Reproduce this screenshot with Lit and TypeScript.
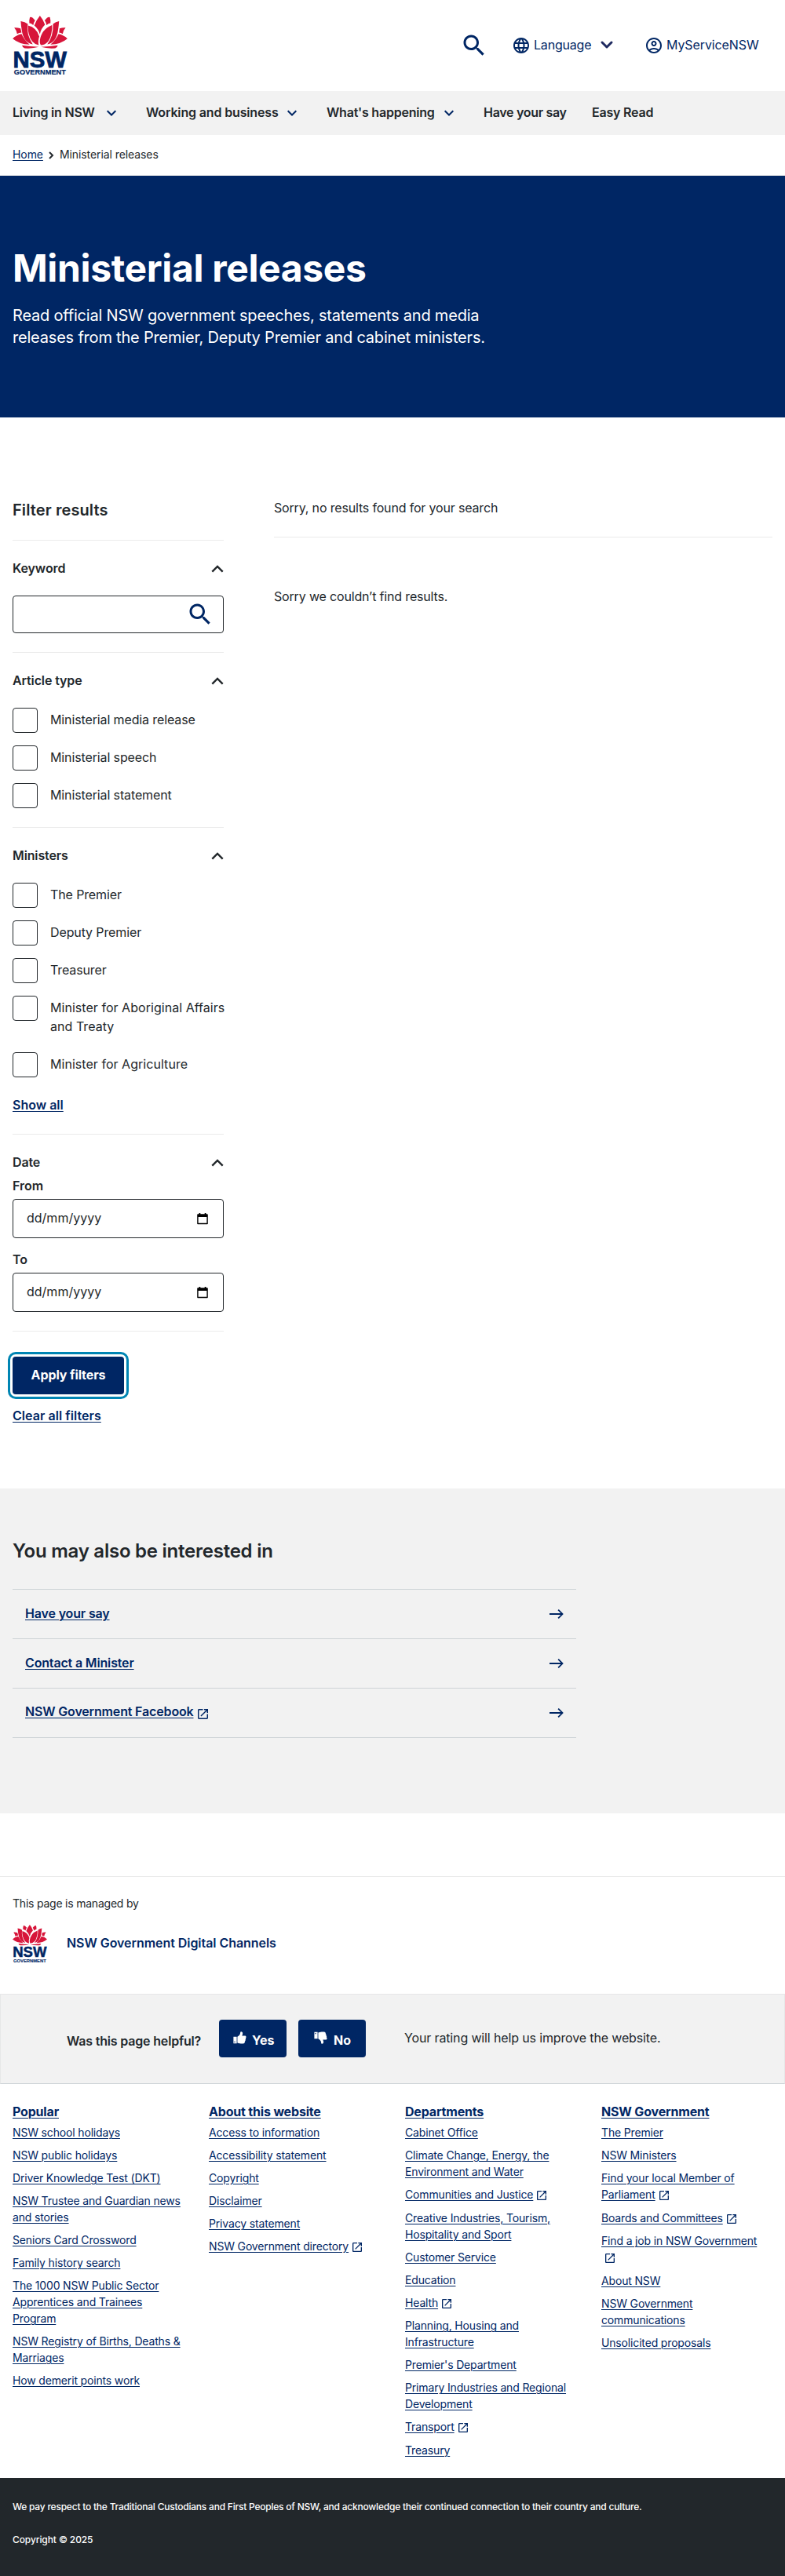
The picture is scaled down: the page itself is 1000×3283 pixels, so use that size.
import { LitElement, html, css, svg, nothing } from "lit";
import { customElement } from "lit/decorators.js";

interface FooterLink {
  lines: string[];
  external?: boolean;
  iconBelow?: boolean;
}

const link = (...lines: string[]): FooterLink => ({ lines });
const ext = (...lines: string[]): FooterLink => ({ lines, external: true });

const NAV = [
  { label: "Living in NSW", menu: true },
  { label: "Working and business", menu: true },
  { label: "What's happening", menu: true },
  { label: "Have your say", menu: false },
  { label: "Easy Read", menu: false },
];

const ARTICLE_TYPES = ["Ministerial media release", "Ministerial speech", "Ministerial statement"];
const MINISTERS = [
  "The Premier",
  "Deputy Premier",
  "Treasurer",
  "Minister for Aboriginal Affairs and Treaty",
  "Minister for Agriculture",
];

const RELATED = [
  { label: "Have your say", external: false },
  { label: "Contact a Minister", external: false },
  { label: "NSW Government Facebook", external: true },
];

const FOOTER: { title: string; links: FooterLink[] }[] = [
  {
    title: "Popular",
    links: [
      link("NSW school holidays"),
      link("NSW public holidays"),
      link("Driver Knowledge Test (DKT)"),
      link("NSW Trustee and Guardian news", "and stories"),
      link("Seniors Card Crossword"),
      link("Family history search"),
      link("The 1000 NSW Public Sector", "Apprentices and Trainees", "Program"),
      link("NSW Registry of Births, Deaths &", "Marriages"),
      link("How demerit points work"),
    ],
  },
  {
    title: "About this website",
    links: [
      link("Access to information"),
      link("Accessibility statement"),
      link("Copyright"),
      link("Disclaimer"),
      link("Privacy statement"),
      ext("NSW Government directory"),
    ],
  },
  {
    title: "Departments",
    links: [
      link("Cabinet Office"),
      link("Climate Change, Energy, the", "Environment and Water"),
      ext("Communities and Justice"),
      link("Creative Industries, Tourism,", "Hospitality and Sport"),
      link("Customer Service"),
      link("Education"),
      ext("Health"),
      link("Planning, Housing and", "Infrastructure"),
      link("Premier's Department"),
      link("Primary Industries and Regional", "Development"),
      ext("Transport"),
      link("Treasury"),
    ],
  },
  {
    title: "NSW Government",
    links: [
      link("The Premier"),
      link("NSW Ministers"),
      ext("Find your local Member of", "Parliament"),
      ext("Boards and Committees"),
      { lines: ["Find a job in NSW Government"], external: true, iconBelow: true },
      link("About NSW"),
      link("NSW Government", "communications"),
      link("Unsolicited proposals"),
    ],
  },
];

const logo = (cls: string) => html`
  <svg class=${cls} viewBox="48 60 210 229" role="img" aria-label="NSW Government">
    <g fill="#d7153a">
      <path d="M48 148Q62 134 82 130Q92 153 113 171Q72 169 48 148Z" />
      <path d="M54 106Q66 105 78 109L82 125Q72 126 65 130Q63 116 54 106Z" />
      <path d="M79 81Q95 83 106 92Q99 132 125 170Q89 163 83 116Q80 98 79 81Z" />
      <path d="M114 66Q122 62 134 78Q128 87 127 96Q118 89 112 89Q111 76 114 66Z" />
      <path d="M107 98Q140 106 150 140Q144 158 148 173Q119 168 110 130Q105 114 107 98Z" />
      <path d="M152.500 60Q165 74 172 95Q155 112 152.500 131Q147 112 131 98Q139 76 152.500 60Z" />
      <path d="M199 96Q158 112 152 156Q151 168 156 173Q187 172 196 130Q201 112 199 96Z" />
      <path d="M191 66Q183 62 171 78Q177 87 178 96Q187 89 193 89Q194 76 191 66Z" />
      <path d="M226 81Q213 83 203 92Q205 138 181 170Q216 163 222 116Q225 98 226 81Z" />
      <path d="M251 106Q239 105 228 109L226 125Q233 126 240 130Q242 116 251 106Z" />
      <path d="M258 148Q244 134 224 130Q214 153 193 171Q234 169 258 148Z" />
      <path d="M84 174Q115 178 148 180Q125 187 94 185Q85 182 84 174Z" />
      <path d="M221 174Q190 178 157 180Q180 187 211 185Q220 182 221 174Z" />
    </g>
    <g fill="#002664" stroke="#002664" font-family="'Liberation Sans', Arial, sans-serif" font-weight="700">
      <text x="49" y="258" font-size="90" stroke-width="2.500" textLength="206" lengthAdjust="spacingAndGlyphs">NSW</text>
      <text x="53" y="287" font-size="28" stroke-width="0.600" textLength="199" lengthAdjust="spacingAndGlyphs">GOVERNMENT</text>
    </g>
  </svg>
`;

const searchPath = svg`<path
  d="M15.5 14h-.79l-.28-.27C15.410 12.590 16 11.110 16 9.500 16 5.910 13.090 3 9.500 3S3 5.910 3 9.500 5.910 16 9.500 16c1.610 0 3.090-.59 4.230-1.570l.27.28v.79l5 4.990L20.490 19l-4.990-5zm-6 0C7.010 14 5 11.990 5 9.500S7.010 5 9.500 5 14 7.010 14 9.500 11.990 14 9.500 14z"
/>`;

const searchIcon = () => html`<svg class="ico36" viewBox="0 0 24 24">${searchPath}</svg>`;

const globeIcon = () => html`<svg class="ico24" viewBox="0 0 24 24">
  <path
    d="M11.990 2C6.470 2 2 6.480 2 12s4.470 10 9.990 10C17.520 22 22 17.520 22 12S17.520 2 11.990 2zm6.930 6h-2.950c-.32-1.250-.78-2.450-1.380-3.560 1.840.63 3.370 1.910 4.330 3.560zM12 4.040c.83 1.200 1.480 2.530 1.910 3.960h-3.820c.43-1.430 1.080-2.760 1.910-3.960zM4.260 14C4.100 13.360 4 12.690 4 12s.1-1.360.26-2h3.380c-.08.66-.14 1.320-.14 2s.06 1.340.14 2H4.260zm.82 2h2.950c.32 1.250.78 2.450 1.380 3.560-1.840-.63-3.370-1.900-4.330-3.560zm2.950-8H5.080c.96-1.660 2.490-2.930 4.330-3.560C8.810 5.550 8.350 6.750 8.030 8zM12 19.960c-.83-1.200-1.480-2.530-1.910-3.960h3.820c-.43 1.430-1.080 2.760-1.910 3.960zM14.340 14H9.660c-.09-.66-.16-1.320-.16-2s.07-1.350.16-2h4.680c.09.65.16 1.320.16 2s-.07 1.340-.16 2zm.25 5.560c.6-1.110 1.060-2.310 1.380-3.560h2.950c-.96 1.650-2.490 2.930-4.330 3.560zM16.360 14c.08-.66.14-1.320.14-2s-.06-1.340-.14-2h3.380c.16.64.26 1.310.26 2s-.1 1.360-.26 2h-3.380z"
  />
</svg>`;

const userIcon = () => html`<svg class="ico24" viewBox="0 0 24 24">
  <path
    d="M12 2C6.480 2 2 6.480 2 12s4.480 10 10 10 10-4.480 10-10S17.520 2 12 2zM7.350 18.500C8.660 17.560 10.260 17 12 17s3.340.56 4.650 1.500C15.340 19.440 13.740 20 12 20s-3.340-.56-4.650-1.500zm10.790-1.380C16.450 15.800 14.320 15 12 15s-4.450.8-6.140 2.120C4.700 15.730 4 13.950 4 12c0-4.420 3.580-8 8-8s8 3.580 8 8c0 1.950-.7 3.730-1.860 5.120z"
  />
  <path
    d="M12 6c-1.930 0-3.500 1.570-3.500 3.500S10.070 13 12 13s3.500-1.570 3.500-3.500S13.930 6 12 6zm0 5c-.83 0-1.500-.67-1.500-1.500S11.170 8 12 8s1.500.67 1.500 1.500S12.830 11 12 11z"
  />
</svg>`;

const upIcon = () => html`<svg class="up" viewBox="0 0 16 10">
  <path d="M1.300 8.600L8 1.900l6.700 6.700" />
</svg>`;

const externalIcon = (cls: string) => html`<svg class=${cls} viewBox="3 3 18 18">
  <path
    d="M19 19H5V5h7V3H5c-1.110 0-2 .9-2 2v14c0 1.100.89 2 2 2h14c1.100 0 2-.9 2-2v-7h-2v7zM14 3v2h3.590l-9.830 9.830 1.410 1.410L19 6.410V10h2V3h-7z"
  />
</svg>`;

const arrowIcon = () => html`<svg class="arrow" viewBox="0 0 18 12">
  <path d="M0 5h14.300L10.500 1.300 11.800 0 17.800 6l-6 6-1.300-1.300L14.300 7H0z" />
</svg>`;

const calendarIcon = () => html`<svg class="cal" viewBox="0 0 14 15">
  <path fill-rule="evenodd" d="M2.500 0h1.800v1.200h5.400V0h1.800v1.200H13a.8.8 0 0 1 .8.8v11.400a.8.8 0 0 1-.8.8H1a.8.8 0 0 1-.8-.8V2a.8.8 0 0 1 .8-.8h1.500zM1.600 5v7.800h10.800V5z" />
</svg>`;

const thumbIcon = (cls: string) => html`<svg class=${cls} viewBox="0 0 17 16">
  <path fill-rule="evenodd" d="M.4 6.700h4.200v8.500H.4zM1.400 12.700v1.300h1.200v-1.300z" />
  <path
    d="M5.400 6.800c1.400-.6 2.900-2.300 3.400-3.500.3-.8.2-2.100.7-2.800.4-.5 1.600-.4 2.200.4.700 1 .5 2.600-.1 3.800l-.3.800h3.600c1 0 1.700.7 1.700 1.500 0 .6-.2 1-.6 1.300.4.900.2 1.700-.4 2.300.2.9 0 1.700-.7 2.200.2 1.500-.7 2.600-2.300 2.700-2.500.2-4.400-.1-7.200-1z"
  />
</svg>`;

@customElement("app-root")
export class AppRoot extends LitElement {
  static styles = css`
    :host {
      display: block;
      width: 1000px;
      background: #fff;
      color: #22272b;
      font: 400 16px/24px Inter, "Liberation Sans", sans-serif;
    }
    * {
      box-sizing: border-box;
      margin: 0;
      padding: 0;
    }
    ul {
      list-style: none;
    }
    svg {
      display: block;
      flex: none;
      fill: #002664;
      overflow: visible;
    }
    a {
      color: #002664;
      text-decoration: underline;
      text-underline-offset: 2px;
      text-decoration-thickness: 1px;
    }
    /* Optical alignment: lifts single text runs by one pixel. */
    .t {
      transform: translateY(-1px);
    }
    .ico36 {
      width: 36px;
      height: 36px;
    }
    .ico24 {
      width: 24px;
      height: 24px;
    }
    .header {
      height: 116px;
      padding: 0 35px 0 16px;
      display: flex;
      align-items: center;
    }
    .logo-main {
      width: 70px;
      height: 76px;
      margin-right: auto;
    }
    .tools {
      display: flex;
      align-items: center;
      color: #002664;
      letter-spacing: -0.2px;
    }
    .tool {
      display: flex;
      align-items: center;
      gap: 4px;
    }
    .tool.lang {
      margin-left: 30px;
      width: 129px;
    }
    .tool.user {
      margin-left: 40px;
      width: 144px;
      white-space: nowrap;
      letter-spacing: -0.1px;
    }
    .lang-chev {
      width: 16px;
      height: 10px;
      margin-left: auto;
      margin-top: -2px;
      fill: none;
      stroke: #1f2a60;
      stroke-width: 3;
      stroke-linecap: round;
      stroke-linejoin: round;
    }
    .nav {
      height: 56px;
      background: #f2f2f2;
      padding-left: 16px;
      display: flex;
      align-items: center;
      font-weight: 600;
    }
    .nav-item {
      display: flex;
      align-items: center;
      white-space: nowrap;
      letter-spacing: -0.22px;
    }
    .nav-item.n0 { width: 170px; }
    .nav-item.n1 { width: 230px; letter-spacing: -0.15px; }
    .nav-item.n2 { width: 200px; }
    .nav-item.n3 { width: 138px; letter-spacing: -0.3px; }
    .nav-chev {
      width: 12px;
      height: 8px;
      margin-left: auto;
      margin-right: 38px;
      fill: none;
      stroke: #002664;
      stroke-width: 2;
    }
    .crumbs {
      height: 52px;
      border-bottom: 1px solid #ebebeb;
      padding: 14px 16px 0;
      display: flex;
      align-items: flex-start;
      font-size: 14px;
      line-height: 21px;
      letter-spacing: -0.08px;
    }
    .crumb-chev {
      width: 7px;
      height: 10px;
      margin: 7px 7px 0 7px;
      fill: none;
      stroke: #22272b;
      stroke-width: 2;
    }
    .hero {
      height: 308px;
      background: #002664;
      color: #fff;
      padding: 88px 16px 0;
    }
    .hero h1 {
      font-size: 48px;
      line-height: 60px;
      font-weight: 700;
      letter-spacing: -0.35px;
    }
    .hero p {
      font-size: 20px;
      line-height: 28px;
      margin-top: 16px;
      letter-spacing: -0.2px;
    }
    .body {
      display: flex;
      gap: 64px;
      padding: 104px 16px 80px;
      align-items: flex-start;
    }
    .filters {
      width: 269px;
      flex: none;
    }
    .filters h2 {
      font-size: 20px;
      line-height: 28px;
      font-weight: 600;
      padding-bottom: 24px;
      letter-spacing: 0.1px;
    }
    .group {
      border-top: 1px solid #ebebeb;
      padding: 24px 0;
    }
    .group.last {
      border-bottom: 1px solid #ebebeb;
    }
    .group-head {
      display: flex;
      justify-content: space-between;
      align-items: center;
      font-weight: 600;
      letter-spacing: -0.12px;
    }
    .up {
      width: 16px;
      height: 10px;
      fill: none;
      stroke: #22272b;
      stroke-width: 2.4;
    }
    .keyword {
      margin-top: 22px;
      height: 48px;
      border: 1px solid #22272b;
      border-radius: 4px;
      display: flex;
      justify-content: flex-end;
      align-items: center;
      padding-right: 11px;
    }
    .checks {
      margin-top: 22px;
      display: flex;
      flex-direction: column;
      gap: 16px;
    }
    .checks li {
      display: flex;
      gap: 16px;
    }
    .box {
      width: 32px;
      height: 32px;
      flex: none;
      border: 1px solid #22272b;
      border-radius: 4px;
    }
    .box-label {
      padding: 4px 0;
      margin-right: -12px;
      letter-spacing: -0.12px;
    }
    .box-label.wide {
      letter-spacing: 0.04px;
    }
    .showall {
      display: block;
      margin-top: 24px;
      font-weight: 600;
    }
    .field-label {
      display: block;
      font-weight: 600;
      margin-top: 6px;
    }
    .field-label.to {
      margin-top: 16px;
    }
    .date {
      margin-top: 4px;
      height: 50px;
      border: 1px solid #22272b;
      border-radius: 4px;
      display: flex;
      align-items: center;
      justify-content: space-between;
      padding: 0 19px 0 17px;
    }
    .cal {
      width: 14px;
      height: 15px;
      fill: #000;
    }
    .apply {
      width: 142px;
      height: 48px;
      margin-top: 32px;
      border-radius: 4px;
      background: #002664;
      color: #fff;
      font-weight: 700;
      display: flex;
      align-items: center;
      justify-content: center;
      letter-spacing: -0.1px;
      outline: 3px solid #0085b3;
      outline-offset: 3px;
    }
    .clear {
      display: block;
      margin-top: 16px;
      font-weight: 600;
      letter-spacing: 0.06px;
    }
    .results {
      flex: 1;
      letter-spacing: -0.17px;
    }
    .results p:first-child {
      margin-top: -1px;
      padding-bottom: 25px;
      border-bottom: 1px solid #ebebeb;
      margin-bottom: 63px;
    }
    .related {
      background: #f2f2f2;
      height: 414px;
      padding: 64px 16px 0;
    }
    .related h2 {
      font-size: 24px;
      line-height: 32px;
      font-weight: 600;
      margin-bottom: 32px;
      letter-spacing: -0.24px;
    }
    .related ul {
      width: 718px;
      border-top: 1px solid #cdd3d6;
    }
    .related li {
      height: 63px;
      border-bottom: 1px solid #cdd3d6;
      padding: 0 16px;
      display: flex;
      align-items: center;
    }
    .related a {
      font-weight: 600;
      letter-spacing: -0.16px;
    }
    .related .external a {
      margin-top: -2px;
    }
    .ext16 {
      width: 13px;
      height: 13px;
      margin: 2px 0 0 5px;
    }
    .arrow {
      width: 18px;
      height: 12px;
      margin-left: auto;
    }
    .managed {
      margin-top: 80px;
      height: 150px;
      border-top: 1px solid #ebebeb;
      padding: 24px 16px 0;
    }
    .managed p {
      font-size: 14px;
      line-height: 21px;
      letter-spacing: -0.22px;
    }
    .owner {
      margin-top: 16px;
      display: flex;
      align-items: center;
      color: #002664;
      font-weight: 600;
      letter-spacing: -0.05px;
    }
    .logo-small {
      width: 44px;
      height: 48px;
      margin-right: 25px;
    }
    .helpful {
      height: 115px;
      background: #f2f2f2;
      border: 1px solid #e6e7e8;
      border-bottom-color: #cdd3d6;
      padding-left: 84px;
      display: flex;
      align-items: flex-start;
    }
    .ask {
      width: 194px;
      margin-top: 48px;
      font-weight: 600;
      letter-spacing: -0.18px;
    }
    .vote {
      width: 86px;
      height: 48px;
      margin: 32px 15px 0 0;
      border-radius: 4px;
      background: #002664;
      color: #fff;
      font-weight: 700;
      display: flex;
      align-items: center;
      padding: 4px 0 0 18px;
    }
    .vote.no {
      padding-left: 20px;
    }
    .thumb {
      width: 17px;
      height: 16px;
      margin: -6px 7px 0 0;
      fill: #fff;
    }
    .thumb.down {
      transform: scaleY(-1);
      margin-right: 8px;
    }
    .thanks {
      margin: 43px 0 0 34px;
      letter-spacing: -0.14px;
    }
    .links {
      height: 502px;
      padding: 23px 16px 0;
      display: grid;
      grid-template-columns: repeat(4, 218px);
      column-gap: 32px;
      white-space: nowrap;
    }
    .links h3 {
      font-size: 16px;
      line-height: 24px;
      font-weight: 700;
      margin-bottom: 4px;
      letter-spacing: -0.18px;
    }
    .links li {
      font-size: 14px;
      line-height: 21px;
      margin-bottom: 8px;
      letter-spacing: -0.16px;
    }
    .links li.external {
      padding-bottom: 0.6px;
    }
    .ext14 {
      display: inline-block;
      width: 12px;
      height: 12px;
      margin-left: 5px;
      vertical-align: -2px;
    }
    .legal {
      height: 125px;
      background: #22272b;
      color: #fff;
      padding: 28px 16px 0;
      font-size: 12px;
      line-height: 18px;
      font-weight: 500;
      letter-spacing: -0.22px;
      display: flex;
      flex-direction: column;
      gap: 24px;
    }
    .legal .year {
      letter-spacing: -0.1px;
    }
  `;

  private checks(items: string[]) {
    return html`<ul class="checks">
      ${items.map(
        (t) => html`<li>
          <span class="box"></span><span class="box-label t ${t.startsWith("Minister for") ? "wide" : ""}">${t}</span>
        </li>`
      )}
    </ul>`;
  }

  private groupHead(label: string) {
    return html`<div class="group-head"><span class="t">${label}</span>${upIcon()}</div>`;
  }

  private footerLink(l: FooterLink) {
    return html`<li class=${l.external ? "external" : ""}>
      <a>${l.lines.map((t, i) => (i ? html`<br />${t}` : t))}</a>${l.iconBelow ? html`<br />` : nothing}${l.external
        ? externalIcon("ext14")
        : nothing}
    </li>`;
  }

  render() {
    return html`
      <header class="header">
        ${logo("logo-main")}
        <div class="tools">
          ${searchIcon()}
          <div class="tool lang">
            ${globeIcon()}<span class="t">Language</span>
            <svg class="lang-chev" viewBox="0 0 16 10"><path d="M2 2l6 6 6-6" /></svg>
          </div>
          <div class="tool user">${userIcon()}<span class="t">MyServiceNSW</span></div>
        </div>
      </header>
      <nav class="nav">
        ${NAV.map(
          (n, i) => html`<div class="nav-item n${i}">
            <span class="t">${n.label}</span>
            ${n.menu ? html`<svg class="nav-chev" viewBox="0 0 12 8"><path d="M.7 1.200L6 6.500l5.300-5.300" /></svg>` : nothing}
          </div>`
        )}
      </nav>
      <div class="crumbs">
        <a>Home</a>
        <svg class="crumb-chev" viewBox="0 0 7 10"><path d="M1 1l4 4-4 4" /></svg>
        <span>Ministerial releases</span>
      </div>
      <section class="hero">
        <h1>Ministerial releases</h1>
        <p>
          Read official NSW government speeches, statements and media<br />releases from the Premier, Deputy Premier and
          cabinet ministers.
        </p>
      </section>
      <main class="body">
        <aside class="filters">
          <h2>Filter results</h2>
          <div class="group">
            ${this.groupHead("Keyword")}
            <div class="keyword">${searchIcon()}</div>
          </div>
          <div class="group">${this.groupHead("Article type")} ${this.checks(ARTICLE_TYPES)}</div>
          <div class="group">
            ${this.groupHead("Ministers")} ${this.checks(MINISTERS)}
            <a class="showall t">Show all</a>
          </div>
          <div class="group last">
            ${this.groupHead("Date")}
            <span class="field-label t">From</span>
            <div class="date"><span class="t">dd/mm/yyyy</span>${calendarIcon()}</div>
            <span class="field-label to t">To</span>
            <div class="date"><span class="t">dd/mm/yyyy</span>${calendarIcon()}</div>
          </div>
          <div class="apply"><span class="t">Apply filters</span></div>
          <a class="clear t">Clear all filters</a>
        </aside>
        <section class="results">
          <p>Sorry, no results found for your search</p>
          <p>Sorry we couldn’t find results.</p>
        </section>
      </main>
      <section class="related">
        <h2>You may also be interested in</h2>
        <ul>
          ${RELATED.map(
            (r) => html`<li class=${r.external ? "external" : ""}>
              <a class="t">${r.label}</a>${r.external ? externalIcon("ext16") : nothing}${arrowIcon()}
            </li>`
          )}
        </ul>
      </section>
      <section class="managed">
        <p class="t">This page is managed by</p>
        <div class="owner">${logo("logo-small")}<span class="t">NSW Government Digital Channels</span></div>
      </section>
      <section class="helpful">
        <span class="ask t">Was this page helpful?</span>
        <div class="vote">${thumbIcon("thumb")}<span>Yes</span></div>
        <div class="vote no">${thumbIcon("thumb down")}<span>No</span></div>
        <span class="thanks">Your rating will help us improve the website.</span>
      </section>
      <footer>
        <div class="links">
          ${FOOTER.map(
            (c) => html`<div>
              <h3><a>${c.title}</a></h3>
              <ul>
                ${c.links.map((l) => this.footerLink(l))}
              </ul>
            </div>`
          )}
        </div>
        <div class="legal">
          <p>
            We pay respect to the Traditional Custodians and First Peoples of NSW, and acknowledge their continued
            connection to their country and culture.
          </p>
          <p class="year">Copyright © 2025</p>
        </div>
      </footer>
    `;
  }
}
